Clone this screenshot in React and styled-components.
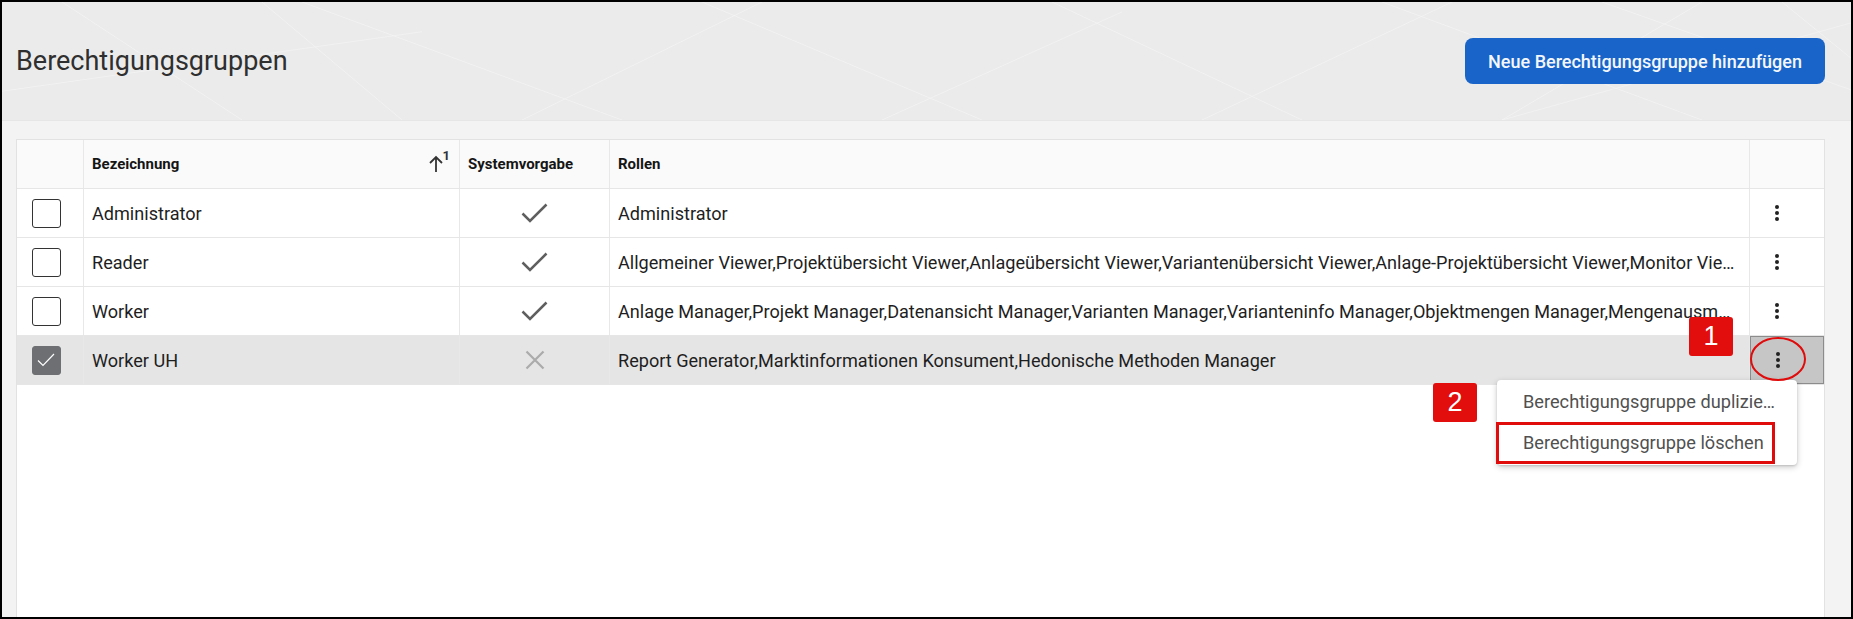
import React from 'react';
import styled, { createGlobalStyle } from 'styled-components';

const GlobalStyle = createGlobalStyle`
  html, body { margin: 0; padding: 0; background: #fff; }
  body { font-family: Roboto, "Liberation Sans", Arial, sans-serif; }
  *, *::before, *::after { box-sizing: border-box; }
`;

const Frame = styled.div`
  position: relative;
  width: 1853px;
  height: 619px;
  border: 2px solid #000;
  background: #f3f3f3;
  display: flex;
  flex-direction: column;
  overflow: hidden;
`;

const Header = styled.header`
  position: relative;
  flex: none;
  height: 119px;
  background: #ebebeb;
  border-bottom: 1px solid #e6e6e6;
  display: flex;
  align-items: center;
  justify-content: space-between;
  padding: 0 26px 0 14px;
  overflow: hidden;
`;

const Pattern = styled.svg`
  position: absolute;
  inset: 0;
  width: 100%;
  height: 100%;
  pointer-events: none;
`;

const Title = styled.h1`
  position: relative;
  margin: 0;
  font-size: 27px;
  font-weight: 400;
  color: #2f2f2f;
`;

const PrimaryButton = styled.button`
  position: relative;
  height: 46px;
  padding: 0 23px;
  border: none;
  border-radius: 8px;
  background: #1964c8;
  color: #f4f7fc;
  font-family: Roboto, "Liberation Sans", sans-serif;
  font-size: 18px;
  font-weight: 500;
  cursor: pointer;
`;

const Content = styled.main`
  flex: 1;
  display: flex;
  padding: 18px 26px 0 14px;
  min-height: 0;
`;

const Table = styled.div`
  flex: 1;
  background: #fff;
  border: 1px solid #e2e2e2;
  border-bottom: none;
  display: flex;
  flex-direction: column;
`;

const Row = styled.div`
  display: grid;
  grid-template-columns: 67px 376px 150px 1fr 74px;
  height: 49px;
  border-bottom: 1px solid #e6e6e6;
  background: ${p => (p.$head ? '#fafafa' : p.$selected ? '#e5e5e5' : '#fff')};
`;

const Cell = styled.div`
  display: flex;
  align-items: center;
  min-width: 0;
  padding: 0 ${p => p.$pr || 8}px 0 ${p => p.$pl ?? 8}px;
  justify-content: ${p => p.$align || 'flex-start'};
  border-right: ${p => (p.$last ? 'none' : '1px solid #e8e8e8')};
  font-size: 18.1px;
  color: #1e1e1e;
  white-space: nowrap;
  overflow: hidden;
`;

const HeadLabel = styled.span`
  font-size: 15px;
  font-weight: 700;
  color: #151515;
`;

const CellText = styled.span`
  overflow: hidden;
  text-overflow: ellipsis;
  white-space: nowrap;
`;

const SortMark = styled.span`
  display: flex;
  align-items: flex-start;
  color: #333;
`;

const SortIndex = styled.span`
  font-size: 13px;
  font-weight: 700;
  line-height: 1;
  margin-top: -6px;
  margin-left: -1px;
`;

const Box = styled.span`
  width: 29px;
  height: 29px;
  border-radius: 3px;
  border: 1.5px solid ${p => (p.$checked ? '#6d6f73' : '#333')};
  background: ${p => (p.$checked ? '#6d6f73' : '#fff')};
  display: flex;
  align-items: center;
  justify-content: center;
`;

const ActionCell = styled(Cell)`
  padding-left: 15px;
  ${p => p.$active && `
    background: #c6c6c6;
    border: 1px solid #8c8c8c;
  `}
`;

const Menu = styled.div`
  position: absolute;
  left: 1495px;
  top: 378px;
  width: 300px;
  padding: 1px 0 2px;
  background: #fff;
  border-radius: 4px;
  box-shadow: 0 2px 6px rgba(0,0,0,0.22), 0 1px 2px rgba(0,0,0,0.12);
  z-index: 5;
`;

const MenuItem = styled.div`
  display: block;
  height: 41px;
  line-height: 41px;
  padding: 0 21px 0 26px;
  font-size: 18.2px;
  color: #505050;
  white-space: nowrap;
  overflow: hidden;
  text-overflow: ellipsis;
`;

const Badge = styled.div`
  position: absolute;
  left: ${p => p.$x}px;
  top: ${p => p.$y}px;
  width: 44px;
  height: 39px;
  border-radius: 3px;
  background: #e20d0d;
  color: #fff;
  font-family: "Liberation Sans", Arial, sans-serif;
  font-size: 27px;
  display: flex;
  align-items: center;
  justify-content: center;
  z-index: 6;
`;

const Ring = styled.svg`
  position: absolute;
  left: 1748px;
  top: 335px;
  width: 56px;
  height: 44px;
  overflow: visible;
  z-index: 6;
`;

const Highlight = styled.div`
  position: absolute;
  left: 1494px;
  top: 420px;
  width: 279px;
  height: 42px;
  border: 3px solid #e00b0b;
  z-index: 6;
`;

const Check = () => (
  <svg width="27" height="20" viewBox="0 0 27 20">
    <path d="M1.5 10.5 L9 18 L25.5 1.5" fill="none" stroke="#5f5f5f" strokeWidth="2.5" />
  </svg>
);

const Cross = () => (
  <svg width="20" height="20" viewBox="0 0 20 20">
    <path d="M1.5 1.5 L18.5 18.5 M18.5 1.5 L1.5 18.5" fill="none" stroke="#ababab" strokeWidth="2.2" />
  </svg>
);

const Kebab = () => (
  <svg width="24" height="24" viewBox="0 0 24 24">
    <circle cx="12" cy="6" r="2" fill="#222" />
    <circle cx="12" cy="12" r="2" fill="#222" />
    <circle cx="12" cy="18" r="2" fill="#222" />
  </svg>
);

const ArrowUp = () => (
  <svg width="16" height="18" viewBox="0 0 16 18">
    <path d="M8 17 V2 M2 8 L8 2 L14 8" fill="none" stroke="#333" strokeWidth="1.8" />
  </svg>
);

const rows = [
  { name: 'Administrator', sys: true, roles: 'Administrator' },
  {
    name: 'Reader',
    sys: true,
    roles:
      'Allgemeiner Viewer,Projektübersicht Viewer,Anlageübersicht Viewer,Variantenübersicht Viewer,Anlage-Projektübersicht Viewer,Monitor Viewer,Report Viewer',
  },
  {
    name: 'Worker',
    sys: true,
    roles:
      'Anlage Manager,Projekt Manager,Datenansicht Manager,Varianten Manager,Varianteninfo Manager,Objektmengen Manager,Mengenausmaß Manager,Report Manager',
  },
  {
    name: 'Worker UH',
    sys: false,
    selected: true,
    roles: 'Report Generator,Marktinformationen Konsument,Hedonische Methoden Manager',
  },
];

const lines = [
  [300, 0, 620, 119], [520, 119, 760, 0], [700, 0, 980, 119], [880, 119, 1120, 10],
  [0, 90, 420, 30], [400, 119, 260, 0], [1050, 0, 1300, 119], [1380, 0, 1700, 119],
  [1500, 119, 1853, 20], [1600, 0, 1853, 90], [1700, 0, 1500, 119], [1200, 119, 1450, 0],
  [60, 0, 240, 119], [1780, 0, 1853, 60],
];

export default function App() {
  return (
    <>
      <GlobalStyle />
      <Frame>
        <Header>
          <Pattern viewBox="0 0 1849 119" preserveAspectRatio="none">
            {lines.map(([x1, y1, x2, y2], i) => (
              <line key={i} x1={x1} y1={y1} x2={x2} y2={y2} stroke="#f5f5f5" strokeWidth="1" opacity="0.7" />
            ))}
          </Pattern>
          <Title>Berechtigungsgruppen</Title>
          <PrimaryButton>Neue Berechtigungsgruppe hinzufügen</PrimaryButton>
        </Header>
        <Content>
          <Table>
            <Row $head>
              <Cell />
              <Cell $align="space-between" $pr={9}>
                <HeadLabel>Bezeichnung</HeadLabel>
                <SortMark>
                  <ArrowUp />
                  <SortIndex>1</SortIndex>
                </SortMark>
              </Cell>
              <Cell>
                <HeadLabel>Systemvorgabe</HeadLabel>
              </Cell>
              <Cell>
                <HeadLabel>Rollen</HeadLabel>
              </Cell>
              <Cell $last />
            </Row>
            {rows.map((r) => (
              <Row key={r.name} $selected={r.selected}>
                <Cell $align="center" $pl={0} $pr={0}>
                  <Box $checked={r.selected}>
                    {r.selected && (
                      <svg width="20" height="16" viewBox="0 0 20 16">
                        <path d="M2 8.5 L7 13.5 L18 2" fill="none" stroke="#fff" strokeWidth="1.2" />
                      </svg>
                    )}
                  </Box>
                </Cell>
                <Cell>
                  <CellText>{r.name}</CellText>
                </Cell>
                <Cell $align="center">{r.sys ? <Check /> : <Cross />}</Cell>
                <Cell $pr={14}>
                  <CellText>{r.roles}</CellText>
                </Cell>
                <ActionCell $last $active={r.selected}>
                  <Kebab />
                </ActionCell>
              </Row>
            ))}
          </Table>
        </Content>

        <Menu>
          <MenuItem>Berechtigungsgruppe duplizieren</MenuItem>
          <MenuItem>Berechtigungsgruppe löschen</MenuItem>
        </Menu>
        <Highlight />
        <Badge $x={1687} $y={315}>1</Badge>
        <Badge $x={1431} $y={381}>2</Badge>
        <Ring viewBox="0 0 56 44">
          <ellipse cx="28" cy="22" rx="27" ry="21" fill="none" stroke="#e00b0b" strokeWidth="2" />
        </Ring>
      </Frame>
    </>
  );
}
